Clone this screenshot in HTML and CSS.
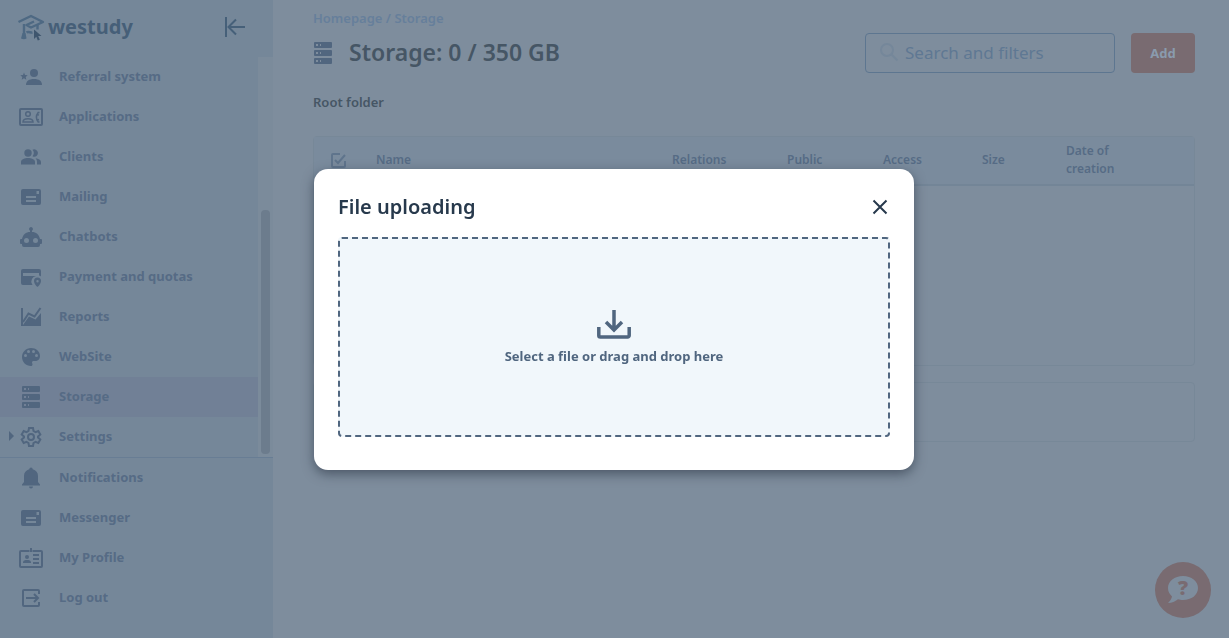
FILE: index.html
```html
<!DOCTYPE html>
<html lang="en">
	<head>
		<meta charset="UTF-8">
		<title>Storage</title>
		<link rel="stylesheet" href="styles.css">
	</head>
	<body>
		<div class="page">
			<aside class="sidebar">
				<div class="sidebarHead">
					<a class="logo" href="#">
						<svg width="28" height="28" viewBox="0 0 28 28" fill="none">
							<path d="M1.500 9 14 3l12 6-12 5.500L9.500 12 17 8.500" stroke="#4e6983" stroke-width="2.400" stroke-linejoin="round"/>
							<path d="M7 11v13M20.500 12v4.500M9.500 19.500c2-1.500 4 .5 6 0" stroke="#4e6983" stroke-width="2.400"/>
							<path d="M5.500 20h3l1 5.500q-2.500 1.500-5.500 0z" fill="#4e6983"/>
							<path d="M17 16.500v9.500l2.300-2.200 1.500 3.700 2-.8-1.600-3.700h3.300z" fill="#3f566e"/>
						</svg>
						<span>westudy</span>
					</a>
					<button class="collapse" type="button" aria-label="Collapse menu">
						<svg width="22" height="22" viewBox="0 0 22 22" fill="none" stroke="#466079" stroke-width="2">
							<path d="M2 1v20M21 11H5M12 3.500 4.500 11l7.500 7.500"/>
						</svg>
					</button>
				</div>
				<div class="scroller">
					<nav class="menu">
						<a href="#"><svg viewBox="0 0 24 24"><circle cx="15" cy="8" r="4"/><path d="M7 20c0-4 3-6 8-6s8 2 8 6z"/><path d="m5 7.500 1 2.500 2.700.2-2 1.800.6 2.700L5 13.200l-2.300 1.500.6-2.700-2-1.800L4 10z"/></svg>Referral system</a>
						<a href="#"><svg viewBox="0 0 24 24"><rect class="line" x="1" y="4" width="22" height="16" rx="1"/><circle class="line thin" cx="9" cy="9" r="2.300"/><path class="line thin" d="M4 17c0-2 2-3.200 5-3.200s5 1.200 5 3.200z"/><path class="line thin" d="M20.500 7.500h-1.300c-2.300 3-2.300 6.500 0 9.500h1.300M18 9.500l2 .5M18 15l2-.5"/></svg>Applications</a>
						<a href="#"><svg viewBox="0 0 24 24"><circle cx="9" cy="8" r="3.700"/><path d="M2 19.500V17c0-3 4-4 7-4s7 1 7 4v2.500z"/><path d="M13.500 11.200a5 5 0 0 0 0-6.400A3.700 3.700 0 1 1 14.500 11.700zM16.500 13.200c3 .5 5.500 1.600 5.500 3.800v2.500h-4V17c0-1.700-.6-2.900-1.500-3.800z"/></svg>Clients</a>
						<a href="#"><svg viewBox="0 0 24 24"><path fill-rule="evenodd" d="M4 4h16a2 2 0 0 1 2 2v12a2 2 0 0 1-2 2H4a2 2 0 0 1-2-2V6a2 2 0 0 1 2-2zm3 7v2h10v-2zm0 4v2h10v-2zM17.500 6v3H20V6z"/></svg>Mailing</a>
						<a href="#"><svg viewBox="0 0 24 24"><path fill-rule="evenodd" d="M12 2a2 2 0 0 1 1 3.700V7c4 0 7 2.500 8 7h1a1 1 0 0 1 1 1v3a1 1 0 0 1-1 1h-1v1a2 2 0 0 1-2 2H5a2 2 0 0 1-2-2v-1H2a1 1 0 0 1-1-1v-3a1 1 0 0 1 1-1h1c1-4.500 4-7 8-7V5.700A2 2 0 0 1 12 2zM7.500 13a2.500 2.500 0 1 0 0 5 2.500 2.500 0 0 0 0-5zm9 0a2.500 2.500 0 1 0 0 5 2.500 2.500 0 0 0 0-5z"/></svg>Chatbots</a>
						<a href="#"><svg viewBox="0 0 24 24"><path fill-rule="evenodd" d="M4 4h16a2 2 0 0 1 2 2v5.500a5 5 0 0 0-2-.9V8H4v3h13a5.500 5.500 0 0 0-4 8l.5 1H4a2 2 0 0 1-2-2V6a2 2 0 0 1 2-2z"/><path fill-rule="evenodd" d="M18.500 12.500a3.500 3.500 0 0 1 3.500 3.500c0 3-3.500 6-3.500 6S15 19 15 16a3.500 3.500 0 0 1 3.500-3.500zm0 2.500a1.200 1.200 0 1 0 0 2.400 1.200 1.200 0 0 0 0-2.400z"/></svg>Payment and quotas</a>
						<a href="#"><svg viewBox="0 0 24 24"><path class="line" d="M3 3v18M4 17l5.500-8.500 6 3L21.500 3"/><path d="M2 21h20V8l-5.500 6.500L10 11.500 4 20z"/></svg>Reports</a>
						<a href="#"><svg viewBox="0 0 24 24"><path fill-rule="evenodd" d="M12 3c-5 0-9 4-9 9s4 9 9 9c1 0 1.500-.7 1.500-1.500 0-.9-.5-1-.5-2 0-.8.7-1.500 1.500-1.500H16c3 0 5-2 5-5 0-4.500-4-8-9-8zM6.500 9a1.500 1.500 0 1 0 0 3 1.500 1.500 0 0 0 0-3zm3-4a1.500 1.500 0 1 0 0 3 1.500 1.500 0 0 0 0-3zm5 0a1.500 1.500 0 1 0 0 3 1.500 1.500 0 0 0 0-3zm3 4a1.500 1.500 0 1 0 0 3 1.500 1.500 0 0 0 0-3z"/></svg>WebSite</a>
						<a class="current" href="#"><svg viewBox="0 0 24 24"><path fill-rule="evenodd" d="M4 1h16a1 1 0 0 1 1 1v4a1 1 0 0 1-1 1H4a1 1 0 0 1-1-1V2a1 1 0 0 1 1-1zm1 2v2h2V3zm4 0v2h1V3zM4 9h16a1 1 0 0 1 1 1v4a1 1 0 0 1-1 1H4a1 1 0 0 1-1-1v-4a1 1 0 0 1 1-1zm1 2v2h2v-2zm4 0v2h1v-2zM4 17h16a1 1 0 0 1 1 1v4a1 1 0 0 1-1 1H4a1 1 0 0 1-1-1v-4a1 1 0 0 1 1-1zm1 2v2h2v-2zm4 0v2h1v-2z"/></svg>Storage</a>
						<a class="more" href="#"><svg viewBox="0 0 24 24"><circle class="line" cx="12" cy="12" r="3"/><path class="line" d="M10 3h4l.5 3 2 1.200 2.800-1.200 2 3.500-2.300 1.900v1.200l2.300 1.900-2 3.500-2.800-1.200-2 1.200-.5 3h-4l-.5-3-2-1.200L4.700 18l-2-3.500L5 12.600v-1.200L2.700 9.500l2-3.500 2.800 1.200 2-1.200z"/></svg>Settings</a>
					</nav>
					<div class="track"><div class="thumb"></div></div>
				</div>
				<nav class="menu">
					<a href="#"><svg viewBox="0 0 24 24"><path d="M12 1.500a1.700 1.700 0 0 1 1.700 1.700C17 4 19 6.500 19 10v6l2 2.500v1H3v-1L5 16v-6c0-3.500 2-6 5.300-6.800A1.700 1.700 0 0 1 12 1.500zM10 20.500h4a2 2 0 0 1-4 0z"/></svg>Notifications</a>
					<a href="#"><svg viewBox="0 0 24 24"><path fill-rule="evenodd" d="M4 4h16a2 2 0 0 1 2 2v12a2 2 0 0 1-2 2H4a2 2 0 0 1-2-2V6a2 2 0 0 1 2-2zm3 7v2h10v-2zm0 4v2h10v-2zM17.500 6v3H20V6z"/></svg>Messenger</a>
					<a href="#"><svg viewBox="0 0 24 24"><path class="line" d="M10.500 5H2a1 1 0 0 0-1 1v14a1 1 0 0 0 1 1h20a1 1 0 0 0 1-1V6a1 1 0 0 0-1-1h-8.500M12 2v4M14 9h6M14 13h6M14 17h6"/><circle cx="8" cy="11" r="2"/><path d="M4 17c0-3 2-3 4-3s4 0 4 3z"/></svg>My Profile</a>
					<a href="#"><svg viewBox="0 0 24 24"><path class="line" d="M20 8V5a1 1 0 0 0-1-1H5a1 1 0 0 0-1 1v14a1 1 0 0 0 1 1h14a1 1 0 0 0 1-1v-3M7 12h12M15 8l4 4-4 4"/></svg>Log out</a>
				</nav>
			</aside>

			<main class="content">
				<div class="crumbs"><a href="#">Homepage</a> / <a href="#">Storage</a></div>
				<div class="titleRow">
					<svg class="titleIcon" width="24" height="24" viewBox="0 0 24 24"><path fill-rule="evenodd" d="M4 1h16a1 1 0 0 1 1 1v4a1 1 0 0 1-1 1H4a1 1 0 0 1-1-1V2a1 1 0 0 1 1-1zm1 2v2h2V3zm4 0v2h1V3zM4 9h16a1 1 0 0 1 1 1v4a1 1 0 0 1-1 1H4a1 1 0 0 1-1-1v-4a1 1 0 0 1 1-1zm1 2v2h2v-2zm4 0v2h1v-2zM4 17h16a1 1 0 0 1 1 1v4a1 1 0 0 1-1 1H4a1 1 0 0 1-1-1v-4a1 1 0 0 1 1-1zm1 2v2h2v-2zm4 0v2h1v-2z"/></svg>
					<h1>Storage: 0 / 350 GB</h1>
					<label class="search">
						<svg width="20" height="20" viewBox="0 0 20 20" fill="none" stroke="#75879a" stroke-width="2"><circle cx="8" cy="8" r="6"/><path d="m12.500 12.500 6 6"/></svg>
						<input type="text" placeholder="Search and filters" aria-label="Search and filters">
					</label>
					<button class="add" type="button">Add</button>
				</div>
				<h2>Root folder</h2>
				<div class="tableBox">
					<table>
						<thead>
							<tr>
								<th class="colCheck"><svg width="16" height="16" viewBox="0 0 16 16" fill="none" stroke="#5f748c" stroke-width="2"><path d="M10 2H3a1 1 0 0 0-1 1v11a1 1 0 0 0 1 1h11a1 1 0 0 0 1-1V9M5 8l3 3 7-8"/></svg></th>
								<th>Name</th>
								<th class="colRelations">Relations</th>
								<th class="colPublic">Public</th>
								<th class="colAccess">Access</th>
								<th class="colSize">Size</th>
								<th class="colDate">Date of creation</th>
							</tr>
						</thead>
					</table>
				</div>
				<div class="pager"></div>
			</main>
		</div>

		<button class="help" type="button" aria-label="Help">
			<svg width="32" height="30" viewBox="0 0 32 30"><path d="M16 1c8.500 0 15 5 15 12s-6.500 12-15 12c-2 0-3.500-.3-5-.8C8 26.500 5 28 1 28c2-2 3.500-4 4-6.500C2.500 19 1 16.500 1 13 1 6 7.500 1 16 1z" fill="#7e8d9d"/></svg>
			<span>?</span>
		</button>

		<div class="overlay">
			<div class="modal" role="dialog" aria-labelledby="modalTitle">
				<div class="modalHead">
					<h2 id="modalTitle">File uploading</h2>
					<button class="close" type="button" aria-label="Close">
						<svg width="20" height="20" viewBox="0 0 20 20" fill="none" stroke="#27394c" stroke-width="2"><path d="m3.500 3.500 13 13M16.500 3.500l-13 13"/></svg>
					</button>
				</div>
				<button class="dropZone" type="button">
					<svg width="36" height="32" viewBox="0 0 36 32" fill="none" stroke="#50667f" stroke-width="3.500"><path d="M18 2v20M10 14l8 8 8-8" /><path d="M2.800 19v8.500a1.500 1.500 0 0 0 1.500 1.500h27.400a1.500 1.500 0 0 0 1.500-1.500V19"/></svg>
					<span>Select a file or drag and drop here</span>
				</button>
			</div>
		</div>
	</body>
</html>
```
FILE: styles.css
```css
*{
	margin: 0;
	padding: 0;
	box-sizing: border-box;
}

body{
	font-family: "Noto Sans", "Open Sans", sans-serif;
	font-size: 13px;
	font-weight: 600;
	color: #566b85;
	background-color: #7e8d9d;
}

a{
	color: inherit;
	text-decoration: none;
}

button,input{
	font-family: inherit;
	border: none;
	background: none;
	outline: none;
}

svg{
	display: block;
	flex: none;
}

.page{
	display: flex;
	min-height: 100vh;
}

/* sidebar */
.sidebar{
	display: flex;
	flex-direction: column;
	flex: none;
	width: 273px;
	height: 100vh;
	background-color: #758799;
}

.sidebarHead{
	display: flex;
	align-items: center;
	justify-content: space-between;
	height: 57px;
	padding: 0 27px 3px 17px;
}

.logo{
	display: flex;
	align-items: center;
	gap: 3px;
	font-size: 20px;
	font-weight: 700;
	line-height: 28px;
	color: #465f78;
}

.scroller{
	display: flex;
	flex: none;
	border-bottom: 1px solid #687d94;
}

.menu{
	flex: 1;
	font-weight: 700;
}

.menu a{
	display: flex;
	align-items: center;
	gap: 16px;
	height: 40px;
	padding: 0 0 2px 19px;
}

.menu svg{
	width: 24px;
	height: 24px;
	margin-top: 2px;
	fill: #51667f;
}

.menu .line{
	fill: none;
	stroke: #51667f;
	stroke-width: 2;
}

.menu .thin{
	stroke-width: 1.5;
}

.menu .current{
	background-color: #718096;
}

.menu .more{
	gap: 0;
	padding-left: 9px;
}

.menu .more svg{
	margin: 2px 16px 0 5px;
}

.menu .more:before{
	content: '';
	border: 5px solid transparent;
	border-left-color: #51667f;
	border-right-width: 0;
}

.track{
	display: flex;
	flex-direction: column;
	justify-content: flex-end;
	width: 15px;
	padding: 3px;
	background-color: #7b8b9b;
}

.thumb{
	height: 62%;
	border-radius: 4px;
	background-color: #6c7c8d;
}

/* content */
.content{
	flex: 1;
	padding: 8px 34px 0 40px;
}

.crumbs{
	line-height: 20px;
	color: #667f9b;
}

.titleRow{
	display: flex;
	align-items: center;
	margin-top: 5px;
}

.titleIcon{
	margin: 0 14px 0 -2px;
	fill: #51667f;
}

h1{
	flex: 1;
	padding-bottom: 2px;
	font-size: 23px;
	font-weight: 600;
	line-height: 32px;
	color: #465665;
}

.search{
	display: flex;
	align-items: center;
	gap: 6px;
	width: 250px;
	height: 40px;
	padding: 0 13px 2px;
	border: 1px solid #5d7690;
	border-radius: 4px;
}

.search input{
	flex: 1;
	min-width: 0;
	font-size: 17px;
	color: #5f7893;
}

.search input::placeholder{
	color: #5f7893;
}

.add{
	width: 64px;
	height: 40px;
	margin-left: 16px;
	border-radius: 4px;
	font-size: 13px;
	font-weight: 700;
	color: #8a9bae;
	background-color: #796b71;
}

.content h2{
	margin-top: 19px;
	font-size: 13px;
	font-weight: 600;
	line-height: 20px;
	color: #465665;
}

.tableBox{
	min-height: 230px;
	margin-top: 24px;
	border: 1px solid #778898;
	border-radius: 4px;
}

table{
	width: 100%;
	table-layout: fixed;
	border-collapse: collapse;
	background-color: #7a8b9d;
}

th{
	height: 48px;
	padding: 0 16px 1px;
	border-bottom: 2px solid #738597;
	font-size: 12px;
	font-weight: 600;
	line-height: 18px;
	text-align: left;
}

.colCheck{
	width: 46px;
}
.colRelations{
	width: 115px;
}
.colPublic{
	width: 96px;
}
.colAccess{
	width: 99px;
}
.colSize{
	width: 84px;
}
.colDate{
	width: 144px;
	padding-right: 64px;
}

.pager{
	height: 60px;
	margin-top: 16px;
	border: 1px solid #778898;
	border-radius: 4px;
}

/* help button over the page */
.help{
	position: fixed;
	right: 18px;
	bottom: 20px;
	display: grid;
	place-items: center;
	width: 56px;
	height: 56px;
	border-radius: 50%;
	background-color: #796b71;
}

.help svg,
.help span{
	grid-area: 1 / 1;
}

.help span{
	padding-bottom: 4px;
	font-family: "Open Sans", sans-serif;
	font-size: 20px;
	font-weight: 800;
	line-height: 20px;
	color: #796b71;
}

/* modal */
.overlay{
	position: fixed;
	inset: 0;
	display: flex;
	align-items: center;
	justify-content: center;
	padding-right: 1px;
}

.modal{
	width: 600px;
	max-width: 100%;
	padding: 20px 24px 33px;
	border-radius: 14px;
	background-color: #fff;
	box-shadow: 0 4px 12px rgba(40,50,65,.6);
}

.modalHead{
	display: flex;
	align-items: center;
	justify-content: space-between;
	margin-bottom: 12px;
}

.modalHead h2{
	font-size: 20px;
	font-weight: 600;
	line-height: 36px;
	color: #27394c;
}

.dropZone{
	display: flex;
	flex-direction: column;
	align-items: center;
	justify-content: center;
	gap: 6px;
	width: 100%;
	height: 200px;
	border: 2px dashed #50667f;
	border-radius: 4px;
	background-color: #f1f7fb;
	font-size: 13px;
	font-weight: 700;
	line-height: 20px;
	color: #50667f;
}
```
